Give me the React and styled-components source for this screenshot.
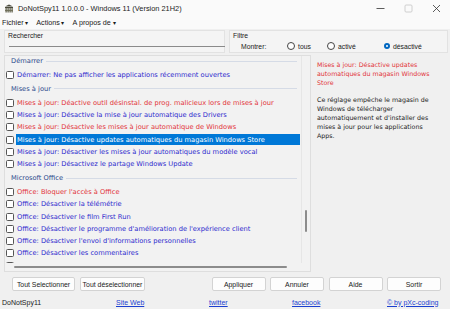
import React from 'react';
import styled, { createGlobalStyle } from 'styled-components';

const Global = createGlobalStyle`
  html, body { margin: 0; padding: 0; }
  body {
    width: 450px; height: 309px; overflow: hidden; background: #f0f0f0;
    font-family: "Liberation Sans", Arial, sans-serif;
  }
`;

const Window = styled.div`
  width: 450px; height: 309px; display: flex; flex-direction: column;
  background: #f0f0f0; overflow: hidden; color: #1a1a1a;
`;

const TitleBar = styled.div`
  height: 16px; flex: none; display: flex; align-items: center;
  background: #fafafa; padding-left: 4px; font-size: 7.4px; color: #1a1a1a;
`;
const TitleText = styled.span` margin-left: 4px; `;
const Controls = styled.div` margin-left: auto; display: flex; height: 100%; `;
const Ctrl = styled.div`
  width: 28px; display: flex; align-items: center; justify-content: center;
`;

const MenuBar = styled.div`
  height: 13px; flex: none; display: flex; align-items: center;
  background: #fafafa; font-size: 7.2px; padding-left: 1px;
`;
const MenuItem = styled.span`
  padding: 0 3px 0 1px; margin-right: 4px; white-space: nowrap;
  &::after { content: " \\25BE"; font-size: 6px; }
`;

const TopRow = styled.div`
  height: 26px; flex: none; display: flex; align-items: flex-start; padding: 1px 2px 0 4px; gap: 4px;
  box-sizing: border-box;
`;
const Group = styled.div`
  box-sizing: border-box; height: 23px; width: ${p => p.$w}px; border: 1px solid #e2e2e2;
  background: #f4f4f4; font-size: 6.8px; display: flex; flex-direction: column; padding: 1px 0 0 3px;
`;
const GroupLabel = styled.div` line-height: 8px; `;
const SearchInput = styled.div`
  margin: 6px 0 0 1px; width: 216px; height: 1px; background: #8a8a8a;
`;
const FilterRow = styled.div`
  display: grid; grid-template-columns: 46px 40px 57px auto; align-items: center;
  padding-left: 8px; margin-top: 1px; height: 10px;
`;
const Radio = styled.span`
  display: inline-flex; align-items: center; gap: 3px; white-space: nowrap;
  &::before {
    content: ""; width: 6px; height: 6px; border-radius: 50%; box-sizing: content-box;
    border: ${p => (p.$on ? '2.5px solid #0067c0' : '0.8px solid #444')};
    background: #fff;
    ${p => (p.$on ? 'width: 2px; height: 2px;' : '')}
  }
`;

const Main = styled.div`
  height: 217px; flex: none; display: flex; padding-left: 4px;
`;
const ListPanel = styled.div`
  position: relative; box-sizing: border-box; width: 307px; height: 217px;
  border: 1px solid #dedede; display: flex; flex-direction: column; background: #f2f2f2;
`;
const ListBody = styled.div` flex: 1; display: flex; overflow: hidden; `;
const ListContent = styled.div`
  flex: 1; overflow: hidden; border-right: 1px solid #e6e6e6;
  font-family: "DejaVu Sans", Verdana, sans-serif; font-size: 6.7px;
`;
const Scrolled = styled.div` margin-top: -2.75px; `;
const VScroll = styled.div` width: 8px; flex: none; position: relative; `;
const VThumb = styled.div`
  position: absolute; left: 3px; top: 154px; width: 1.6px; height: 22px; border-radius: 1px; background: #8c8c8c;
`;
const HScroll = styled.div` height: 8px; flex: none; position: relative; `;
const HThumb = styled.div`
  position: absolute; left: 9px; right: 23px; top: 3px; height: 1.6px; border-radius: 1px; background: #8c8c8c;
`;

const Header = styled.div`
  height: 15.5px; display: flex; align-items: center; padding-left: 6px; color: #2c4a8c;
  &::after { content: ""; flex: 1; height: 1px; background: #d5dbe6; margin: 0 4px 0 3px; }
`;
const Row = styled.div`
  height: 12.3px; display: flex; align-items: center; white-space: nowrap;
`;
const Check = styled.span`
  flex: none; width: 6px; height: 6px; margin: 0 2px 0 1px; border: 0.9px solid #555; border-radius: 1.5px; background: #fff;
`;
const ItemLabel = styled.span`
  flex: 1; height: 11.6px; display: flex; align-items: center; padding-left: 1px; margin-right: 1px;
  color: ${p => (p.$sel ? '#fff' : p.$red ? '#e2343a' : '#2e2ace')};
  background: ${p => (p.$sel ? '#0078d7' : 'transparent')};
`;

const Desc = styled.div`
  padding: 4.5px 0 0 6px; font-family: "DejaVu Sans", Verdana, sans-serif; font-size: 6.3px; line-height: 9px;
  white-space: nowrap;
`;
const DescTitle = styled.div` color: #e2343a; `;
const DescBody = styled.div` color: #222; margin-top: 8px; `;

const ButtonBar = styled.div`
  height: 14px; flex: none; margin-top: 5px; display: flex; padding: 0 9px 0 12px; gap: 5px;
`;
const RightButtons = styled.div` margin-left: auto; display: flex; gap: 4.5px; `;
const Button = styled.div`
  box-sizing: border-box; width: ${p => p.$w}px; height: 14px; display: flex; align-items: center; justify-content: center;
  background: #fdfdfd; border: 1px solid #d3d3d3; border-radius: 2px; font-size: 6.9px; white-space: nowrap; color: #1a1a1a;
`;

const StatusBar = styled.div`
  height: 14px; flex: none; margin-top: 4px; display: grid;
  grid-template-columns: 114px 93px 83px 95px 1fr; align-items: center; padding-left: 2px; font-size: 7px;
`;
const Link = styled.span` color: #1b3fd0; text-decoration: underline; white-space: nowrap; `;

const AppIcon = () => (
  <svg width="10" height="9" viewBox="0 0 10 9">
    <path d="M1 2.5 L5 0.5 L9 2.5 Z" fill="#4a4a3c" />
    <rect x="1" y="3" width="8" height="1" fill="#4a4a3c" />
    <rect x="1.5" y="4" width="1.2" height="4.5" fill="#55553f" />
    <rect x="3.5" y="4" width="1.2" height="4.5" fill="#55553f" />
    <rect x="5.5" y="4" width="1.2" height="4.5" fill="#55553f" />
    <rect x="7.5" y="4" width="1.2" height="4.5" fill="#55553f" />
    <rect x="1" y="6" width="8" height="0.9" fill="#6b6b55" />
  </svg>
);

const items = [
  { h: 'Démarrer' },
  { t: 'Démarrer: Ne pas afficher les applications récemment ouvertes' },
  { h: 'Mises à jour' },
  { t: 'Mises à jour: Déactive outil désinstal. de prog. malicieux lors de mises à jour', red: true },
  { t: 'Mises à jour: Désactive la mise à jour automatique des Drivers' },
  { t: 'Mises à jour: Désactive les mises à jour automatique de Windows', red: true },
  { t: 'Mises à jour: Désactive updates automatiques du magasin Windows Store', sel: true },
  { t: 'Mises à jour: Désactiver les mises à jour automatiques du modèle vocal' },
  { t: 'Mises à jour: Désactivez le partage Windows Update' },
  { h: 'Microsoft Office' },
  { t: "Office: Bloquer l'accès à Office", red: true },
  { t: 'Office: Désactiver la télémétrie' },
  { t: 'Office: Désactiver le film First Run' },
  { t: "Office: Désactiver le programme d'amélioration de l'expérience client" },
  { t: "Office: Désactiver l'envoi d'informations personnelles" },
  { t: 'Office: Désactiver les commentaires' },
  { t: '' },
];

export default function App() {
  return (
    <Window>
      <Global />
      <TitleBar>
        <AppIcon />
        <TitleText>DoNotSpy11 1.0.0.0 - Windows 11 (Version 21H2)</TitleText>
        <Controls>
          <Ctrl>
            <svg width="9" height="9" viewBox="0 0 9 9"><line x1="0.5" y1="4.5" x2="8.5" y2="4.5" stroke="#333" strokeWidth="0.8" /></svg>
          </Ctrl>
          <Ctrl>
            <svg width="9" height="9" viewBox="0 0 9 9"><rect x="1" y="1" width="7" height="7" rx="1" fill="none" stroke="#c4c4c4" strokeWidth="0.8" /></svg>
          </Ctrl>
          <Ctrl>
            <svg width="9" height="9" viewBox="0 0 9 9"><path d="M1 1 L8 8 M8 1 L1 8" stroke="#333" strokeWidth="0.8" /></svg>
          </Ctrl>
        </Controls>
      </TitleBar>
      <MenuBar>
        <MenuItem>Fichier</MenuItem>
        <MenuItem>Actions</MenuItem>
        <MenuItem>A propos de</MenuItem>
      </MenuBar>
      <TopRow>
        <Group $w={221}>
          <GroupLabel>Rechercher</GroupLabel>
          <SearchInput />
        </Group>
        <Group $w={219}>
          <GroupLabel>Filtre</GroupLabel>
          <FilterRow>
            <span>Montrer:</span>
            <Radio>tous</Radio>
            <Radio>activé</Radio>
            <Radio $on>désactivé</Radio>
          </FilterRow>
        </Group>
      </TopRow>
      <Main>
        <ListPanel>
          <ListBody>
            <ListContent>
              <Scrolled>
                {items.map((it, i) =>
                  it.h ? (
                    <Header key={i}>{it.h}</Header>
                  ) : (
                    <Row key={i}>
                      <Check />
                      <ItemLabel $red={it.red} $sel={it.sel}>{it.t}</ItemLabel>
                    </Row>
                  )
                )}
              </Scrolled>
            </ListContent>
            <VScroll><VThumb /></VScroll>
          </ListBody>
          <HScroll><HThumb /></HScroll>
        </ListPanel>
        <Desc>
          <DescTitle>
            Mises à jour: Désactive updates<br />
            automatiques du magasin Windows<br />
            Store
          </DescTitle>
          <DescBody>
            Ce réglage empêche le magasin de<br />
            Windows de télécharger<br />
            automatiquement et d'installer des<br />
            mises à jour pour les applications<br />
            Apps.
          </DescBody>
        </Desc>
      </Main>
      <ButtonBar>
        <Button $w={63}>Tout Selectionner</Button>
        <Button $w={65}>Tout déselectionner</Button>
        <RightButtons>
          <Button $w={54}>Appliquer</Button>
          <Button $w={54}>Annuler</Button>
          <Button $w={54}>Aide</Button>
          <Button $w={54}>Sortir</Button>
        </RightButtons>
      </ButtonBar>
      <StatusBar>
        <span>DoNotSpy11</span>
        <span><Link>Site Web</Link></span>
        <span><Link>twitter</Link></span>
        <span><Link>facebook</Link></span>
        <span><Link>© by pXc-coding</Link></span>
      </StatusBar>
    </Window>
  );
}
